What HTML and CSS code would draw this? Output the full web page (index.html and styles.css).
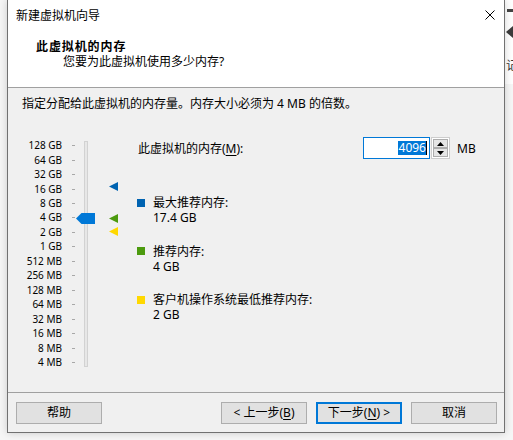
FILE: index.html
```html
<!DOCTYPE html>
<html lang="zh-CN">
<head>
<meta charset="utf-8">
<title>新建虚拟机向导</title>
<link rel="stylesheet" href="styles.css">
</head>
<body>
<div class="desktop">
  <div class="behind">
    <div class="behind-bar"></div>
    <svg class="behind-chev" width="8" height="12" viewBox="0 0 8 12"><polygon points="0,6 7,0 7,12" fill="#3c3c3c"/></svg>
    <span class="behind-text">记</span>
  </div>
  <div class="window">
    <div class="titlebar">
      <span class="title">新建虚拟机向导</span>
      <svg class="close" width="10" height="10" viewBox="0 0 10 10"><path d="M0.5 0.5 L9.5 9.5 M9.5 0.5 L0.5 9.5" stroke="#000" stroke-width="1" fill="none"/></svg>
    </div>
    <div class="header">
      <div class="h-title">此虚拟机的内存</div>
      <div class="h-sub">您要为此虚拟机使用多少内存?</div>
    </div>
    <div class="content">
      <p class="intro">指定分配给此虚拟机的内存量。内存大小必须为 4 MB 的倍数。</p>
      <div class="main">
        <div class="slider">
          <div class="scale">
            <div class="row"><span class="lbl">128 GB</span><span class="tick"></span></div>
            <div class="row"><span class="lbl">64 GB</span><span class="tick"></span></div>
            <div class="row"><span class="lbl">32 GB</span><span class="tick"></span></div>
            <div class="row"><span class="lbl">16 GB</span><span class="tick"></span></div>
            <div class="row"><span class="lbl">8 GB</span><span class="tick"></span></div>
            <div class="row"><span class="lbl">4 GB</span><span class="tick"></span></div>
            <div class="row"><span class="lbl">2 GB</span><span class="tick"></span></div>
            <div class="row"><span class="lbl">1 GB</span><span class="tick"></span></div>
            <div class="row"><span class="lbl">512 MB</span><span class="tick"></span></div>
            <div class="row"><span class="lbl">256 MB</span><span class="tick"></span></div>
            <div class="row"><span class="lbl">128 MB</span><span class="tick"></span></div>
            <div class="row"><span class="lbl">64 MB</span><span class="tick"></span></div>
            <div class="row"><span class="lbl">32 MB</span><span class="tick"></span></div>
            <div class="row"><span class="lbl">16 MB</span><span class="tick"></span></div>
            <div class="row"><span class="lbl">8 MB</span><span class="tick"></span></div>
            <div class="row"><span class="lbl">4 MB</span><span class="tick"></span></div>
          </div>
          <div class="track"></div>
          <svg class="thumb" width="19" height="11" viewBox="0 0 19 11"><polygon points="0,5.5 5.5,0 19,0 19,11 5.5,11" fill="#0078d7"/></svg>
          <svg class="marker m-max" width="9" height="9" viewBox="0 0 9 9"><polygon points="0,4.5 9,0 9,9" fill="#0063b1"/></svg>
          <svg class="marker m-rec" width="9" height="9" viewBox="0 0 9 9"><polygon points="0,4.5 9,0 9,9" fill="#4c9a0e"/></svg>
          <svg class="marker m-min" width="9" height="9" viewBox="0 0 9 9"><polygon points="0,4.5 9,0 9,9" fill="#ffd800"/></svg>
        </div>
        <div class="panel">
          <div class="mem-row">
            <span class="mem-label">此虚拟机的内存(<u>M</u>):</span>
            <div class="input"><span class="sel">4096</span><span class="caret"></span></div>
            <div class="spin">
              <div class="spin-btn"><svg width="7" height="4" viewBox="0 0 7 4"><polygon points="3.5,0 7,4 0,4" fill="#000"/></svg></div>
              <div class="spin-btn"><svg width="7" height="4" viewBox="0 0 7 4"><polygon points="0,0 7,0 3.5,4" fill="#000"/></svg></div>
            </div>
            <span class="unit">MB</span>
          </div>
          <div class="legend">
            <div class="item">
              <div class="item-title"><span class="sq sq-max"></span>最大推荐内存:</div>
              <div class="item-val">17.4 GB</div>
            </div>
            <div class="item">
              <div class="item-title"><span class="sq sq-rec"></span>推荐内存:</div>
              <div class="item-val">4 GB</div>
            </div>
            <div class="item">
              <div class="item-title"><span class="sq sq-min"></span>客户机操作系统最低推荐内存:</div>
              <div class="item-val">2 GB</div>
            </div>
          </div>
        </div>
      </div>
    </div>
    <div class="footer">
      <button class="btn">帮助</button>
      <div class="spacer"></div>
      <button class="btn">&lt; 上一步(<u>B</u>)</button>
      <button class="btn btn-default">下一步(<u>N</u>) &gt;</button>
      <button class="btn">取消</button>
    </div>
  </div>
</div>
</body>
</html>
```

FILE: styles.css
```css
* { box-sizing: border-box; }
html, body {
  margin: 0;
  padding: 0;
  width: 513px;
  height: 440px;
  overflow: hidden;
  background: #f6f6f6;
}
body {
  font-family: "Noto Sans", "Noto Sans CJK SC", sans-serif;
  font-size: 12px;
  line-height: 16px;
  color: #000;
}
.desktop {
  position: relative;
  width: 513px;
  height: 440px;
  padding-left: 7px;
}
.behind {
  position: absolute;
  left: 505px;
  top: 0;
  width: 8px;
  height: 84px;
  background: #fff;
  overflow: hidden;
}
.behind-bar {
  position: absolute;
  left: 2px;
  top: 9px;
  width: 8px;
  height: 3px;
  background: #444;
}
.behind-chev {
  position: absolute;
  left: 1px;
  top: 26px;
}
.behind-text {
  position: absolute;
  left: 1px;
  top: 58px;
  width: 7px;
  overflow: hidden;
  font-size: 12px;
  color: #333;
}
.window {
  width: 498px;
  height: 433px;
  border: 1px solid #717171;
  border-top: none;
  background: #f0f0f0;
  display: flex;
  flex-direction: column;
  box-shadow: 0 0 8px rgba(0,0,0,0.18);
  position: relative;
}
.titlebar {
  height: 30px;
  background: #fff;
  display: flex;
  align-items: center;
  justify-content: space-between;
  padding: 0 9px 0 8px;
}
.title { line-height: 16px; padding-top: 1px; }
.close { display: block; }
.header {
  height: 58px;
  background: #fff;
  border-bottom: 1px solid #a0a0a0;
  padding: 9px 0 0 28px;
}
.h-title {
  font-weight: bold;
  letter-spacing: 0.9px;
}
.h-sub {
  padding-left: 27px;
  margin-top: -1px;
}
.content {
  height: 304px;
  display: flex;
  flex-direction: column;
}
.intro {
  margin: 0;
  padding: 8px 0 0 14px;
  height: 24px;
}
.main {
  margin-top: 25px;
  display: flex;
}
.slider {
  position: relative;
  width: 129px;
  display: flex;
  align-items: flex-start;
}
.scale {
  padding-top: 1.5px;
  display: flex;
  flex-direction: column;
}
.row {
  height: 14.467px;
  display: flex;
  align-items: center;
}
.lbl {
  width: 54px;
  text-align: right;
  font-size: 10px;
  line-height: 13px;
  color: #000;
  white-space: nowrap;
}
.tick {
  width: 3px;
  height: 1px;
  margin-left: 10px;
  background: #a8a8a8;
}
.track {
  margin-left: 9px;
  margin-top: 4px;
  width: 4px;
  height: 226px;
  background: #e7e7e7;
  border: 1px solid #d2d2d2;
}
.thumb {
  position: absolute;
  left: 68px;
  top: 76px;
}
.marker {
  position: absolute;
  left: 101px;
}
.m-max { top: 45px; }
.m-rec { top: 76.5px; }
.m-min { top: 90.2px; }
.panel {
  flex: 1;
  display: flex;
  flex-direction: column;
}
.mem-row {
  display: flex;
  align-items: center;
  height: 22px;
}
.mem-label {
  width: 226px;
  padding-left: 1px;
  padding-top: 2px;
}
.mem-label u, .btn u { text-decoration: underline; text-underline-offset: 2px; }
.input {
  width: 67px;
  height: 22px;
  border: 1px solid #0078d7;
  background: #fff;
  display: flex;
  align-items: center;
  justify-content: flex-end;
  padding-right: 2px;
}
.sel {
  background: #0078d7;
  color: #fff;
  line-height: 14px;
  padding: 0 0 0 1px;
}
.caret {
  width: 1px;
  height: 14px;
  background: #000;
}
.spin {
  margin-left: 1px;
  width: 19px;
  height: 22px;
  border: 1px solid #cdcdcd;
  background: #fff;
  padding: 1px;
  display: flex;
  flex-direction: column;
}
.spin-btn {
  flex: 1;
  background: #e5e5e5;
  border: 1px solid #adadad;
  display: flex;
  align-items: center;
  justify-content: center;
}
.spin-btn svg { display: block; }
.unit {
  margin-left: 7px;
  padding-top: 1px;
}
.legend {
  margin-top: 36px;
  display: flex;
  flex-direction: column;
  gap: 18.5px;
}
.item {
  line-height: 15px;
}
.item-title {
  display: flex;
  align-items: center;
}
.sq {
  width: 8px;
  height: 8px;
  margin-right: 8px;
  flex: none;
}
.sq-max { background: #0063b1; }
.sq-rec { background: #4c9a0e; }
.sq-min { background: #ffd800; }
.item-val {
  padding-left: 16px;
}
.footer {
  flex: 1;
  border-top: 1px solid #a0a0a0;
  display: flex;
  align-items: flex-start;
  padding: 9px 7px 0 8px;
  gap: 9px;
}
.spacer { flex: 1; }
.btn {
  width: 86px;
  height: 22px;
  border: 1px solid #adadad;
  background: #e1e1e1;
  font-family: "Noto Sans", "Noto Sans CJK SC", sans-serif;
  font-size: 12px;
  line-height: 16px;
  color: #000;
  padding: 0;
  margin: 0;
}
.btn-default {
  border: 2px solid #0078d7;
}
```
